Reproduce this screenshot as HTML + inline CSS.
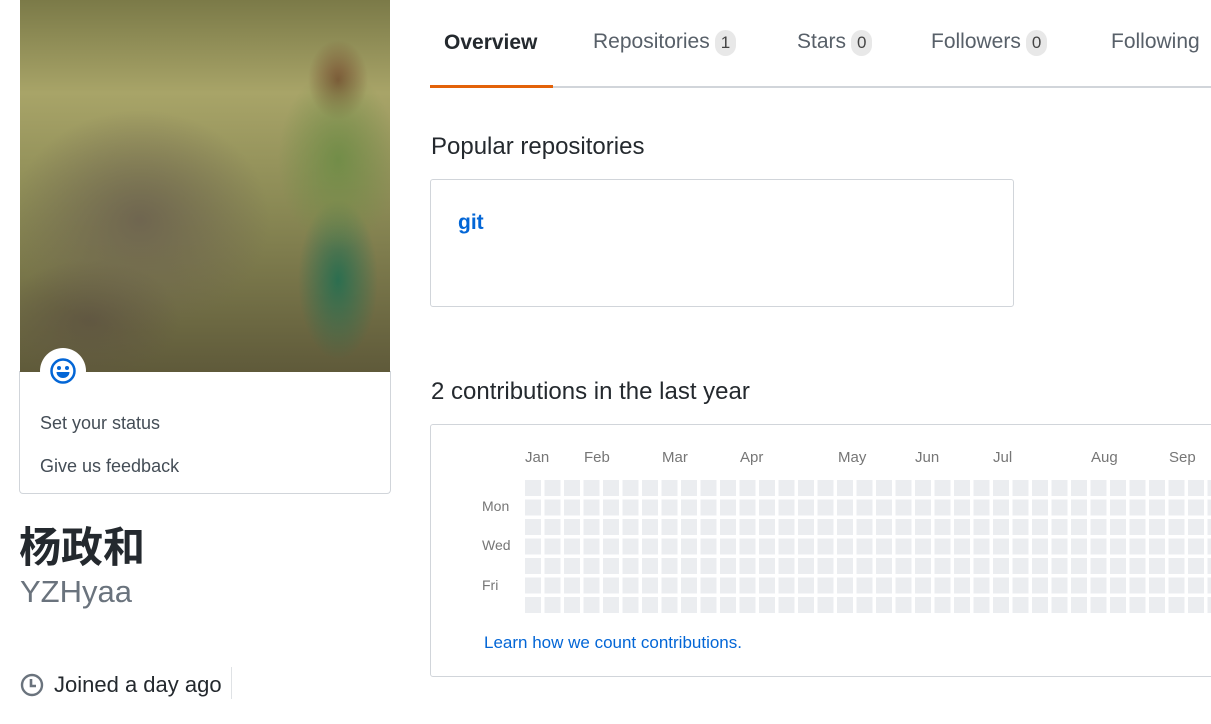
<!DOCTYPE html>
<html><head><meta charset="utf-8"><style>
body{margin:0;width:1211px;height:724px;overflow:hidden;background:#fff;font-family:"Liberation Sans","Noto Sans CJK SC",sans-serif;color:#24292e;position:relative}
.a{position:absolute;white-space:nowrap}
.tab{position:absolute;top:30px;font-size:21px;color:#586069}
.cnt{display:inline-block;background:#e8e8e8;border-radius:12px;padding:0 6px;font-size:17px;color:#444;margin-left:5px;line-height:26px}
.mo{position:absolute;top:449px;font-size:15px;color:#767676}
.dy{position:absolute;left:482px;font-size:14px;color:#767676}
</style></head><body>
<div class="a" style="left:20px;top:0;width:370px;height:372px;background:
radial-gradient(ellipse 60px 90px at 318px 160px,rgba(110,140,70,.9),transparent),
radial-gradient(ellipse 40px 80px at 318px 280px,rgba(40,110,80,.95),transparent),
radial-gradient(ellipse 30px 40px at 318px 80px,rgba(120,80,50,.9),transparent),
radial-gradient(ellipse 130px 110px at 120px 220px,rgba(110,100,80,.95),transparent),
radial-gradient(ellipse 90px 60px at 70px 320px,rgba(95,85,65,.9),transparent),
linear-gradient(180deg,#7b7a48 0%,#a8a468 25%,#8b8a55 55%,#5f5a3a 100%)"></div>
<div class="a" style="left:19px;top:371px;width:370px;height:122px;border:1px solid #d1d5da;border-top:none;border-radius:0 0 4px 4px"></div>
<div class="a" style="left:40px;top:348px;width:46px;height:46px;border-radius:50%;background:#fff"></div>
<svg class="a" style="left:49px;top:357px" width="28" height="28" viewBox="0 0 28 28"><circle cx="14" cy="14" r="11.5" fill="none" stroke="#0366d6" stroke-width="2.5"/><circle cx="10" cy="11" r="2" fill="#0366d6"/><circle cx="18" cy="11" r="2" fill="#0366d6"/><path d="M7.5 15h13a6.5 6 0 0 1-13 0z" fill="#0366d6"/></svg>
<div class="a" style="left:40px;top:413px;font-size:18px;color:#444d56">Set your status</div>
<div class="a" style="left:40px;top:456px;font-size:18px;color:#444d56">Give us feedback</div>
<div class="a" style="left:19px;top:522px;font-size:42px;font-weight:bold;color:#24292e;line-height:52px">杨政和</div>
<div class="a" style="left:20px;top:573px;font-size:31px;color:#6a737d;font-weight:300;line-height:38px">YZHyaa</div>
<svg class="a" style="left:20px;top:673px" width="24" height="24" viewBox="0 0 24 24"><circle cx="12" cy="12" r="10" fill="none" stroke="#6a737d" stroke-width="2.4"/><path d="M11 6v7h5" fill="none" stroke="#6a737d" stroke-width="2.6"/></svg>
<div class="a" style="left:54px;top:672px;font-size:22px;color:#24292e">Joined a day ago</div>
<div class="a" style="left:231px;top:667px;width:1px;height:32px;background:#dfe2e5"></div>

<div class="tab" style="left:444px;color:#24292e;font-weight:bold;top:31px">Overview</div>
<div class="tab" style="left:593px">Repositories<span class="cnt">1</span></div>
<div class="tab" style="left:797px">Stars<span class="cnt">0</span></div>
<div class="tab" style="left:931px">Followers<span class="cnt">0</span></div>
<div class="tab" style="left:1111px">Following</div>
<div class="a" style="left:430px;top:86px;width:781px;height:2px;background:#d1d5da"></div>
<div class="a" style="left:430px;top:85px;width:123px;height:3px;background:#e36209"></div>

<div class="a" style="left:431px;top:133px;font-size:24px;color:#24292e">Popular repositories</div>
<div class="a" style="left:430px;top:179px;width:582px;height:126px;border:1px solid #d1d5da;border-radius:3px"></div>
<div class="a" style="left:458px;top:211px;font-size:21px;font-weight:bold;color:#0366d6">git</div>

<div class="a" style="left:431px;top:378px;font-size:24px;color:#24292e">2 contributions in the last year</div>
<div class="a" style="left:430px;top:424px;width:790px;height:251px;border:1px solid #d1d5da;border-radius:3px"></div>
<div class="mo" style="left:525px">Jan</div><div class="mo" style="left:584px">Feb</div><div class="mo" style="left:662px">Mar</div><div class="mo" style="left:740px">Apr</div><div class="mo" style="left:838px">May</div><div class="mo" style="left:915px">Jun</div><div class="mo" style="left:993px">Jul</div><div class="mo" style="left:1091px">Aug</div><div class="mo" style="left:1169px">Sep</div>
<div class="dy" style="top:498px">Mon</div><div class="dy" style="top:537px">Wed</div><div class="dy" style="top:577px">Fri</div>
<svg class="a" style="left:525px;top:480px" width="686" height="134"><defs><pattern id="p" width="19.5" height="19.5" patternUnits="userSpaceOnUse"><rect width="16" height="16" fill="#ebedf0"/></pattern></defs><rect width="686" height="134" fill="url(#p)"/></svg>
<div class="a" style="left:484px;top:633px;font-size:17px;color:#0366d6">Learn how we count contributions.</div>
</body></html>
